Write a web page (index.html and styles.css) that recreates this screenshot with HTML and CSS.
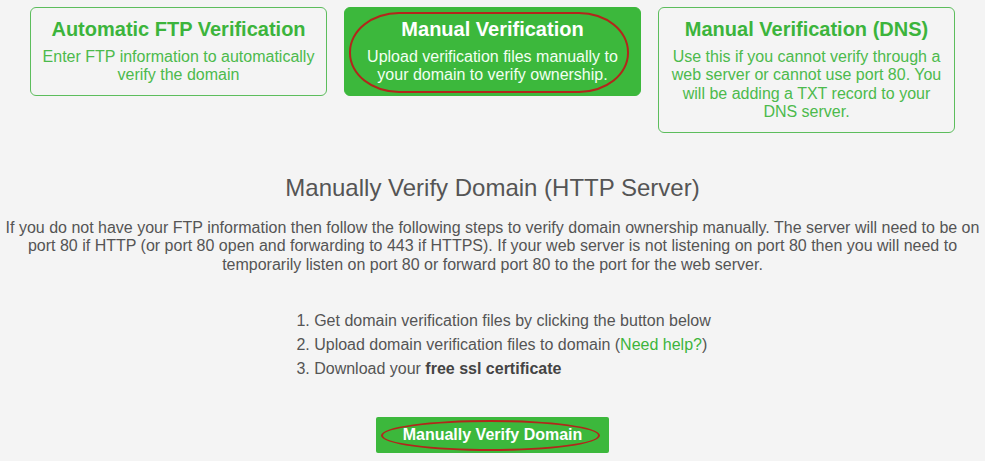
FILE: index.html
```html
<!DOCTYPE html>
<html lang="en">
<head>
<meta charset="utf-8">
<title>Manually Verify Domain</title>
<link rel="stylesheet" href="styles.css">
</head>
<body>
<div class="page">
  <div class="options">
    <div class="option">
      <div class="option-title">Automatic FTP Verification</div>
      <div class="option-desc">Enter FTP information to automatically verify the domain</div>
    </div>
    <div class="option active">
      <div class="option-title">Manual Verification</div>
      <div class="option-desc">Upload verification files manually to your domain to verify ownership.</div>
      <span class="mark mark-card"></span>
    </div>
    <div class="option">
      <div class="option-title">Manual Verification (DNS)</div>
      <div class="option-desc">Use this if you cannot verify through a web server or cannot use port 80. You will be adding a TXT record to your DNS server.</div>
    </div>
  </div>

  <h2 class="section-title">Manually Verify Domain (HTTP Server)</h2>
  <p class="intro">If you do not have your FTP information then follow the following steps to verify domain ownership manually. The server will need to be on port 80 if HTTP (or port 80 open and forwarding to 443 if HTTPS). If your web server is not listening on port 80 then you will need to temporarily listen on port 80 or forward port 80 to the port for the web server.</p>

  <div class="steps-wrap">
    <ol class="steps">
      <li>Get domain verification files by clicking the button below</li>
      <li>Upload domain verification files to domain (<a class="help" href="#">Need help?</a>)</li>
      <li>Download your <strong>free ssl certificate</strong></li>
    </ol>
  </div>

  <div class="action">
    <button class="btn" type="button">Manually Verify Domain<span class="mark mark-btn"></span></button>
  </div>
</div>
</body>
</html>
```

FILE: styles.css
```css
html, body {
  margin: 0;
  padding: 0;
  background: #f4f4f4;
}

body {
  font-family: "Liberation Sans", Arial, sans-serif;
  font-size: 16px;
  color: #555;
}

.page {
  padding-top: 7px;
}

.options {
  display: flex;
  justify-content: center;
  align-items: flex-start;
  gap: 17px;
}

.option {
  position: relative;
  flex: 0 0 297px;
  box-sizing: border-box;
  padding: 10px;
  border: 1px solid #5cbd5c;
  border-radius: 6px;
  text-align: center;
  background: #f4f4f4;
}

.option-title {
  font-size: 20px;
  font-weight: bold;
  color: #3cb43c;
  margin-bottom: 7px;
}

.option-desc {
  color: #4cba4c;
  line-height: 18.4px;
}

.option.active {
  background: #3cb83c;
  border-color: #3cb83c;
}

.option.active .option-title {
  color: #ffffff;
}

.option.active .option-desc {
  color: #f2fff2;
}

.mark {
  position: absolute;
  border: 2px solid #b3261b;
  pointer-events: none;
}

.mark-card {
  left: 4px;
  top: 4px;
  right: 11px;
  bottom: 2px;
  border-radius: 50px / 40px;
}

.section-title {
  margin: 42px 0 18px;
  font-size: 24px;
  font-weight: normal;
  line-height: 26.4px;
  text-align: center;
  color: #555;
}

.intro {
  margin: 0;
  padding: 0 4px;
  text-align: center;
  line-height: 18.4px;
  color: #555;
}

.steps-wrap {
  margin-top: 35px;
  text-align: center;
}

.steps {
  display: inline-block;
  margin: 0;
  padding-left: 40px;
  text-align: left;
  line-height: 24px;
  color: #555;
}

.steps strong {
  color: #444;
}

.help {
  color: #3cb43c;
  text-decoration: none;
}

.action {
  margin-top: 36px;
  text-align: center;
}

.btn {
  position: relative;
  display: inline-block;
  padding: 8px 27px;
  border: 0;
  border-radius: 2px;
  background: #3cb83c;
  color: #ffffff;
  font-family: "Liberation Sans", Arial, sans-serif;
  font-size: 16px;
  font-weight: bold;
  line-height: 20px;
}

.mark-btn {
  left: 5px;
  top: 3px;
  right: 9px;
  bottom: 2px;
  border-radius: 50%;
}
```
